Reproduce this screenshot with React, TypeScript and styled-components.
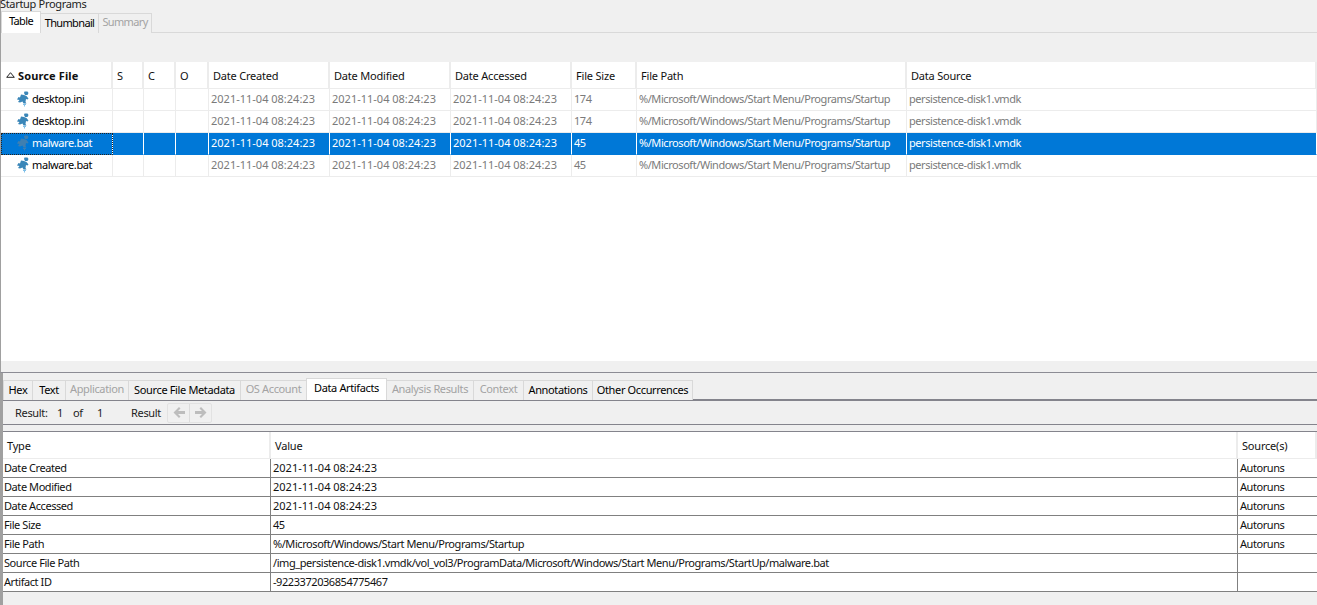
import React from "react";
import styled, { createGlobalStyle } from "styled-components";

const Global = createGlobalStyle`
  html, body { margin: 0; padding: 0; background: #f0f0f0; overflow: hidden; }
  body { font-family: "Noto Sans", "Liberation Sans", Arial, sans-serif; font-size: 11px; letter-spacing: -0.32px; color: #000; }
`;

const Page = styled.div`
  width: 1317px;
  height: 605px;
  display: flex;
  flex-direction: column;
  overflow: hidden;
  background: #f0f0f0;
`;
const TopPane = styled.section`
  height: 372px;
  flex: none;
  display: flex;
  flex-direction: column;
  border-left: 1px solid #a0a0a0;
  border-bottom: 1px solid #8c8c94;
  box-sizing: content-box;
`;
const Title = styled.div`
  height: 13px;
  line-height: 8px;
  margin-left: -1px;
  overflow: hidden;
  font-size: 11px;
  color: #222;
`;
const TabBar = styled.div<{ $pad: number; $h: number }>`
  height: ${(p) => p.$h}px;
  flex: none;
  display: flex;
  align-items: flex-end;
  padding-left: ${(p) => p.$pad}px;
  box-sizing: border-box;
`;
const Tab = styled.div<{ $w: number; $active?: boolean; $off?: boolean; $tight?: boolean }>`
  width: ${(p) => p.$w}px;
  height: ${(p) => (p.$active ? 22 : 20)}px;
  margin-bottom: -1px;
  margin-left: -1px;
  box-sizing: border-box;
  border: 1px solid #d9d9d9;
  border-bottom: none;
  padding-bottom: ${(p) => (p.$active || p.$off ? 4 : 2)}px;
  background: ${(p) => (p.$active ? "#fff" : "#f0f0f0")};
  color: ${(p) => (p.$off ? "#a3a3a3" : "#000")};
  letter-spacing: ${(p) => (p.$tight ? -0.65 : -0.36)}px;
  display: flex;
  align-items: center;
  justify-content: center;
  position: relative;
  z-index: ${(p) => (p.$active ? 1 : 0)};
  white-space: nowrap;
`;
const Toolbar = styled.div`
  height: 30px;
  flex: none;
  border-top: 1px solid #d9d9d9;
  box-sizing: border-box;
  background: #f0f0f0;
`;
const Grid = styled.div<{ $cols: string }>`
  display: grid;
  grid-template-columns: ${(p) => p.$cols};
`;
const Head = styled.div<{ $h: number; $pad: number }>`
  height: ${(p) => p.$h}px;
  box-sizing: border-box;
  background: #fff;
  border-right: 2px solid #ececec;
  border-bottom: 1px solid #ececec;
  display: flex;
  align-items: center;
  padding-left: ${(p) => p.$pad}px;
  white-space: nowrap;
  letter-spacing: -0.2px;
  color: #111;
  &:last-child { border-right: none; }
`;
const SortHead = styled(Head)`
  font-weight: bold;
  letter-spacing: 0.12px;
  gap: 3px;
`;
const SourceCell = styled.div<{ $selected?: boolean }>`
  height: 22px;
  box-sizing: border-box;
  display: flex;
  align-items: center;
  gap: 2px;
  padding-left: 15px;
  padding-bottom: 2px;
  white-space: nowrap;
  letter-spacing: -0.4px;
  background: ${(p) => (p.$selected ? "#0078d7" : "#fff")};
  color: ${(p) => (p.$selected ? "#fff" : "#000")};
  border-bottom: 1px solid ${(p) => (p.$selected ? "#0078d7" : "#ececec")};
  border-right: 1px solid ${(p) => (p.$selected ? "#fff" : "#ececec")};
  outline: ${(p) => (p.$selected ? "1px dotted #222" : "none")};
  outline-offset: -1px;
`;
const Cell = styled.div<{ $selected?: boolean }>`
  height: 22px;
  box-sizing: border-box;
  display: flex;
  align-items: center;
  padding-left: 2px;
  padding-bottom: 2px;
  white-space: nowrap;
  letter-spacing: -0.43px;
  background: ${(p) => (p.$selected ? "#0078d7" : "#fff")};
  color: ${(p) => (p.$selected ? "#fff" : "#7a7a7a")};
  border-bottom: 1px solid ${(p) => (p.$selected ? "#0078d7" : "#ececec")};
  border-right: 1px solid ${(p) => (p.$selected ? "#fff" : "#ececec")};
  &:last-child { border-right: none; }
`;
const Stamp = styled.span`
  letter-spacing: 0;
`;
const Empty = styled.div`
  flex: 1;
  background: #fff;
`;
const ScrollGutter = styled.div`
  height: 11px;
  flex: none;
  background: #f0f0f0;
`;
const BottomPane = styled.section`
  flex: 1;
  display: flex;
  flex-direction: column;
  border-left: 3px solid #a0a0a0;
  min-height: 0;
`;
const TabRule = styled.div`
  height: 2px;
  flex: none;
  background: #84848c;
`;
const ResultBar = styled.div`
  height: 23px;
  flex: none;
  display: flex;
  align-items: center;
  padding-left: 12px;
  border-bottom: 1px solid #84848c;
  color: #222;
  box-sizing: content-box;
`;
const ResultText = styled.span<{ $w: number }>`
  width: ${(p) => p.$w}px;
  white-space: pre;
  flex: none;
`;
const NavGroup = styled.div`
  display: flex;
  height: 20px;
  margin-left: 5px;
  border: 1px solid #e2e2e2;
  border-radius: 2px;
  box-sizing: border-box;
`;
const NavButton = styled.div`
  width: 21px;
  display: flex;
  align-items: center;
  justify-content: center;
  & + & { border-left: 1px solid #dcdcdc; }
`;
const Spacer = styled.div`
  height: 6px;
  flex: none;
  border-bottom: 1px solid #84848c;
`;
const DetailCell = styled.div`
  height: 19px;
  box-sizing: border-box;
  background: #fff;
  border-bottom: 1px solid #808080;
  border-right: 1px solid #808080;
  display: flex;
  align-items: center;
  padding-left: 2px;
  padding-bottom: 2px;
  white-space: nowrap;
  letter-spacing: -0.43px;
  color: #111;
  &:nth-child(3n) { border-right: none; }
  &:nth-child(3n + 1) { padding-left: 1px; }
`;
const BlueIcon = styled.svg`
  width: 14px;
  height: 16px;
  flex: none;
  margin-top: 1px;
`;

const FileIcon = ({ dim }: { dim?: boolean }) => (
  <BlueIcon viewBox="0 0 14 16">
    <g fill={dim ? "#3f7fb0" : "#3a86b8"}>
      <path d="M8.5 0.5 H11.5 L12.5 2 L11.5 4 H9 L8 2 Z" />
      <path d="M5 3.5 L8 4 L10.5 5 L12.5 7.5 L11.5 8.5 L10 8 L9.5 11 L10.5 12.5 L7.5 12.5 L6.5 10.5 L4 11.5 L2 11 L3.5 9 L1 8.5 L2.5 6 L4 6.5 Z" />
    </g>
    <path d="M7 13 h3 v1 h-1 v1.5 h-1 v-1.5 h-1 z" fill={dim ? "#3f7fb0" : "#7fc0e8"} />
  </BlueIcon>
);

const Arrow = ({ dir }: { dir: "left" | "right" }) => (
  <svg width="14" height="13" viewBox="0 0 14 13">
    <path
      d={dir === "left" ? "M7 1 L1.5 6.5 L7 12 L8.5 10.5 L6 8 H13 V5 H6 L8.5 2.5 Z" : "M7 1 L12.5 6.5 L7 12 L5.5 10.5 L8 8 H1 V5 H8 L5.5 2.5 Z"}
      fill="#bdbdbd"
    />
  </svg>
);

const SortMark = () => (
  <svg width="9" height="6" viewBox="0 0 9 6">
    <path d="M4.5 0.7 L8.3 5.3 H0.7 Z" fill="none" stroke="#222" strokeWidth="1" />
  </svg>
);

const COLS = "112px 31px 32px 33px 121px 121px 121px 65px 270px 1fr";
const PATH = "%/Microsoft/Windows/Start Menu/Programs/Startup";
const STAMP = "2021-11-04 08:24:23";
const DISK = "persistence-disk1.vmdk";
const rows = [
  { name: "desktop.ini", size: "174" },
  { name: "desktop.ini", size: "174" },
  { name: "malware.bat", size: "45", selected: true },
  { name: "malware.bat", size: "45" },
];
const headers = ["S", "C", "O", "Date Created", "Date Modified", "Date Accessed", "File Size", "File Path", "Data Source"];
const bottomTabs = [
  { t: "Hex", w: 30 },
  { t: "Text", w: 34 },
  { t: "Application", w: 64, off: true },
  { t: "Source File Metadata", w: 113 },
  { t: "OS Account", w: 67, off: true },
  { t: "Data Artifacts", w: 81, active: true },
  { t: "Analysis Results", w: 88, off: true },
  { t: "Context", w: 51, off: true },
  { t: "Annotations", w: 70 },
  { t: "Other Occurrences", w: 101 },
];
const details = [
  ["Date Created", STAMP, "Autoruns"],
  ["Date Modified", STAMP, "Autoruns"],
  ["Date Accessed", STAMP, "Autoruns"],
  ["File Size", "45", "Autoruns"],
  ["File Path", PATH, "Autoruns"],
  ["Source File Path", "/img_persistence-disk1.vmdk/vol_vol3/ProgramData/Microsoft/Windows/Start Menu/Programs/StartUp/malware.bat", ""],
  ["Artifact ID", "-9223372036854775467", ""],
];

export default function App() {
  return (
    <Page>
      <Global />
      <TopPane>
        <Title>Startup Programs</Title>
        <TabBar $pad={1} $h={19}>
          <Tab $w={40} $active $tight>Table</Tab>
          <Tab $w={59} $tight>Thumbnail</Tab>
          <Tab $w={54} $off $tight>Summary</Tab>
        </TabBar>
        <Toolbar />
        <Grid $cols={COLS}>
          <SortHead $h={27} $pad={5}><SortMark />Source File</SortHead>
          {headers.map((h) => (
            <Head key={h} $h={27} $pad={4}>{h}</Head>
          ))}
          {rows.map((r, i) => (
            <React.Fragment key={i}>
              <SourceCell $selected={r.selected}>
                <FileIcon dim={r.selected} />
                {r.name}
              </SourceCell>
              <Cell $selected={r.selected} />
              <Cell $selected={r.selected} />
              <Cell $selected={r.selected} />
              <Cell $selected={r.selected}><Stamp>{STAMP}</Stamp></Cell>
              <Cell $selected={r.selected}><Stamp>{STAMP}</Stamp></Cell>
              <Cell $selected={r.selected}><Stamp>{STAMP}</Stamp></Cell>
              <Cell $selected={r.selected}>{r.size}</Cell>
              <Cell $selected={r.selected}>{PATH}</Cell>
              <Cell $selected={r.selected}>{DISK}</Cell>
            </React.Fragment>
          ))}
        </Grid>
        <Empty />
        <ScrollGutter />
      </TopPane>
      <BottomPane>
        <TabBar $pad={1} $h={26}>
          {bottomTabs.map((b) => (
            <Tab key={b.t} $w={b.w} $active={b.active} $off={b.off}>{b.t}</Tab>
          ))}
        </TabBar>
        <TabRule />
        <ResultBar>
          <ResultText $w={42}>Result:</ResultText>
          <ResultText $w={16}>1</ResultText>
          <ResultText $w={24}>of</ResultText>
          <ResultText $w={34}>1</ResultText>
          <ResultText $w={31}>Result</ResultText>
          <NavGroup>
            <NavButton><Arrow dir="left" /></NavButton>
            <NavButton><Arrow dir="right" /></NavButton>
          </NavGroup>
        </ResultBar>
        <Spacer />
        <Grid $cols="268px 967px 1fr">
          <Head $h={27} $pad={4}>Type</Head>
          <Head $h={27} $pad={4}>Value</Head>
          <Head $h={27} $pad={4}>Source(s)</Head>
          {details.flat().map((v, i) => (
            <DetailCell key={i}>{v === STAMP ? <Stamp>{v}</Stamp> : v}</DetailCell>
          ))}
        </Grid>
      </BottomPane>
    </Page>
  );
}
